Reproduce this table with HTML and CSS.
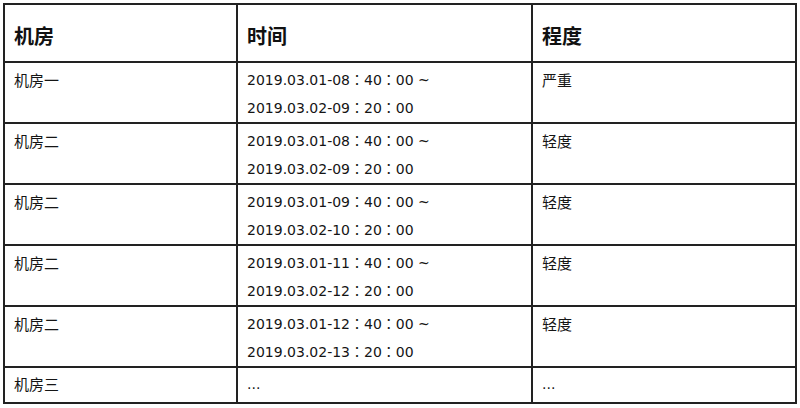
FILE: index.html
```html
<!DOCTYPE html>
<html lang="zh-CN">
<head>
<meta charset="utf-8">
<title>机房</title>
<link rel="stylesheet" href="styles.css">
</head>
<body>
<table class="grid">
  <colgroup>
    <col class="c-room">
    <col class="c-time">
    <col class="c-level">
  </colgroup>
  <thead>
    <tr><th>机房</th><th>时间</th><th>程度</th></tr>
  </thead>
  <tbody>
    <tr>
      <td class="cn">机房一</td>
      <td class="time">2019.03.01-08：40：00 ~<br>2019.03.02-09：20：00</td>
      <td class="cn">严重</td>
    </tr>
    <tr>
      <td class="cn">机房二</td>
      <td class="time">2019.03.01-08：40：00 ~<br>2019.03.02-09：20：00</td>
      <td class="cn">轻度</td>
    </tr>
    <tr>
      <td class="cn">机房二</td>
      <td class="time">2019.03.01-09：40：00 ~<br>2019.03.02-10：20：00</td>
      <td class="cn">轻度</td>
    </tr>
    <tr>
      <td class="cn">机房二</td>
      <td class="time">2019.03.01-11：40：00 ~<br>2019.03.02-12：20：00</td>
      <td class="cn">轻度</td>
    </tr>
    <tr>
      <td class="cn">机房二</td>
      <td class="time">2019.03.01-12：40：00 ~<br>2019.03.02-13：20：00</td>
      <td class="cn">轻度</td>
    </tr>
    <tr class="last">
      <td class="cn">机房三</td>
      <td class="time">...</td>
      <td class="time">...</td>
    </tr>
  </tbody>
</table>
</body>
</html>
```

FILE: styles.css
```css
html, body {
  margin: 0;
  padding: 0;
  background: #fff;
}
body {
  padding: 3px 0 0 3px;
  font-family: "DejaVu Sans", "Noto Sans CJK SC", sans-serif;
  color: #151515;
}
.grid {
  border-collapse: collapse;
  width: 794px;
  table-layout: fixed;
}
.c-room { width: 233px; }
.c-time { width: 295px; }
.c-level { width: 264px; }
.grid th, .grid td {
  border: 2px solid #222;
  text-align: left;
  vertical-align: top;
  padding: 3px 9px 0 9px;
  line-height: 28px;
}
.grid th {
  font-family: "Noto Sans CJK SC", sans-serif;
  font-size: 20px;
  font-weight: 700;
  padding-top: 17px;
  padding-bottom: 11px;
  color: #111;
}
.grid td.cn {
  font-family: "Noto Sans CJK SC", sans-serif;
  font-size: 15px;
}
.grid td.time {
  font-family: "DejaVu Sans", "Noto Sans CJK TC", sans-serif;
  font-size: 14px;
}
.grid tr.last td {
  padding-top: 2px;
  padding-bottom: 4px;
}
```
